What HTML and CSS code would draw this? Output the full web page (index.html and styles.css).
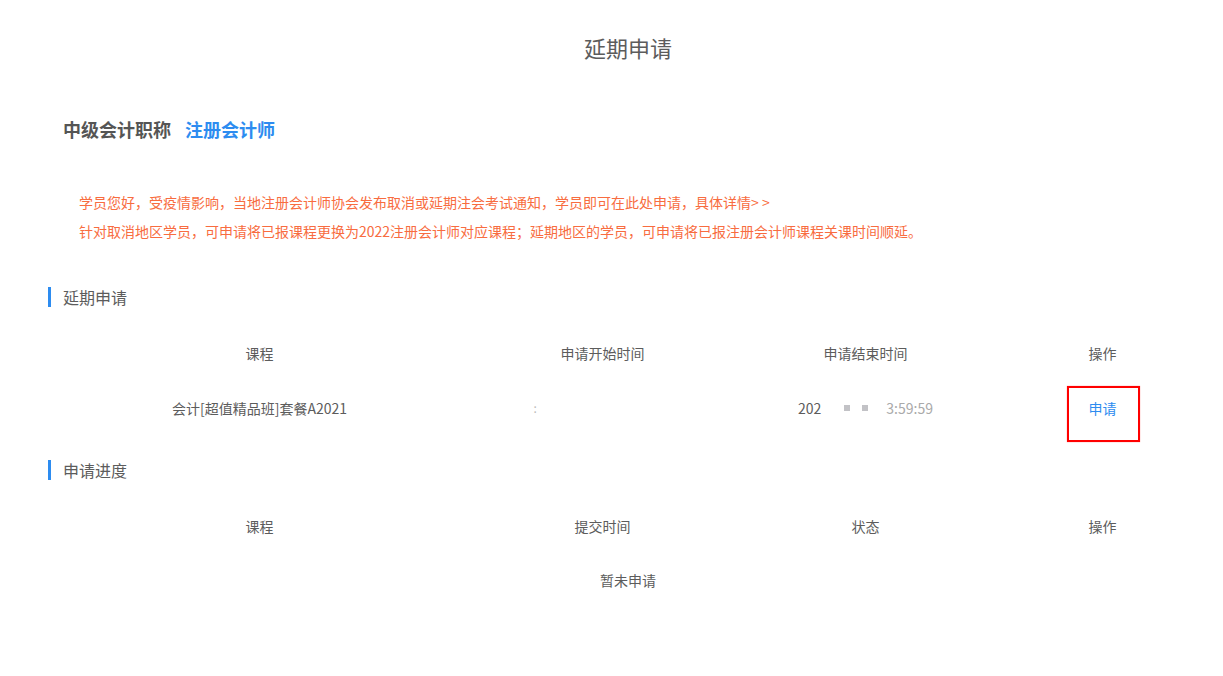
FILE: index.html
```html
<!DOCTYPE html>
<html lang="zh-CN">
<head>
<meta charset="utf-8">
<title>延期申请</title>
<link rel="stylesheet" href="styles.css">
</head>
<body>
<div class="page">
  <h1 class="page-title">延期申请</h1>
  <div class="tabs">
    <span class="tab">中级会计职称</span>
    <span class="tab tab-active">注册会计师</span>
  </div>
  <div class="notice">
    <p>学员您好，受疫情影响，当地注册会计师协会发布取消或延期注会考试通知，学员即可在此处申请，具体详情&gt; &gt;</p>
    <p>针对取消地区学员，可申请将已报课程更换为2022注册会计师对应课程；延期地区的学员，可申请将已报注册会计师课程关课时间顺延。</p>
  </div>

  <h2 class="section-title">延期申请</h2>
  <div class="table">
    <div class="row head">
      <div class="cell">课程</div>
      <div class="cell">申请开始时间</div>
      <div class="cell">申请结束时间</div>
      <div class="cell">操作</div>
    </div>
    <div class="row">
      <div class="cell">会计[超值精品班]套餐A2021</div>
      <div class="cell"><span class="blur-start"><span class="blur-mark">:</span></span></div>
      <div class="cell"><span class="blur-end"><span class="yr">202</span><span class="sq"></span><span class="sq"></span><span class="faint">3:59:59</span></span></div>
      <div class="cell"><a class="apply-link">申请<span class="highlight"></span></a></div>
    </div>
  </div>

  <h2 class="section-title second">申请进度</h2>
  <div class="table">
    <div class="row head">
      <div class="cell">课程</div>
      <div class="cell">提交时间</div>
      <div class="cell">状态</div>
      <div class="cell">操作</div>
    </div>
  </div>
  <div class="empty">暂未申请</div>
</div>
</body>
</html>
```

FILE: styles.css
```css
* { box-sizing: border-box; }
html, body { margin: 0; padding: 0; background: #fff; }
body {
  font-family: "Microsoft YaHei", "Noto Sans CJK SC", "Noto Sans", sans-serif;
  color: #5c5c5c;
  font-size: 14px;
}
.page { width: 1223px; }
.page-title {
  margin: 32px 0 0;
  font-size: 22px;
  font-weight: normal;
  line-height: 30px;
  text-align: center;
  color: #5c5c5c;
  padding-left: 33px;
}
.tabs {
  margin-top: 55px;
  padding-left: 63px;
  line-height: 24px;
  display: flex;
  gap: 14px;
}
.tab {
  font-size: 18px;
  font-weight: bold;
  color: #555;
}
.tab-active { color: #2d8cf0; }
.notice {
  margin-top: 47px;
  padding-left: 79px;
  color: #f86c40;
  font-size: 14px;
  line-height: 29px;
}
.notice p { margin: 0; }
.section-title {
  margin: 41px 0 0 48px;
  padding-left: 12px;
  border-left: 3px solid #2d8cf0;
  font-size: 16px;
  font-weight: normal;
  line-height: 20px;
  height: 20px;
  color: #5c5c5c;
}
.section-title.second { margin-top: 25px; }
.table {
  margin-left: 48px;
  margin-top: 18px;
}
.row {
  display: grid;
  grid-template-columns: 423px 263px 263px 211px;
  height: 55px;
  align-items: center;
}
.cell {
  text-align: center;
  font-size: 14px;
  line-height: 20px;
  color: #5c5c5c;
}
.blur-start {
  display: inline-block;
  width: 138px;
  text-align: left;
}
.blur-mark { color: #bbb; font-size: 12px; }
.blur-end {
  display: inline-flex;
  align-items: center;
}
.yr { margin-right: 23px; }
.sq {
  display: inline-block;
  width: 6px;
  height: 6px;
  background: #c2c2c6;
  margin-right: 12px;
}
.sq + .sq { margin-right: 18px; }
.faint { color: #aaa; }
.apply-link {
  position: relative;
  color: #2d8cf0;
  cursor: pointer;
}
.highlight {
  position: absolute;
  left: -22px;
  top: -12px;
  width: 73px;
  height: 56px;
  border: 2px solid #f00;
  box-shadow: 0 0 1px rgba(255,0,0,0.5);
}
.empty {
  text-align: center;
  line-height: 20px;
  margin-top: 17px;
  padding-left: 33px;
  color: #5c5c5c;
}
```
